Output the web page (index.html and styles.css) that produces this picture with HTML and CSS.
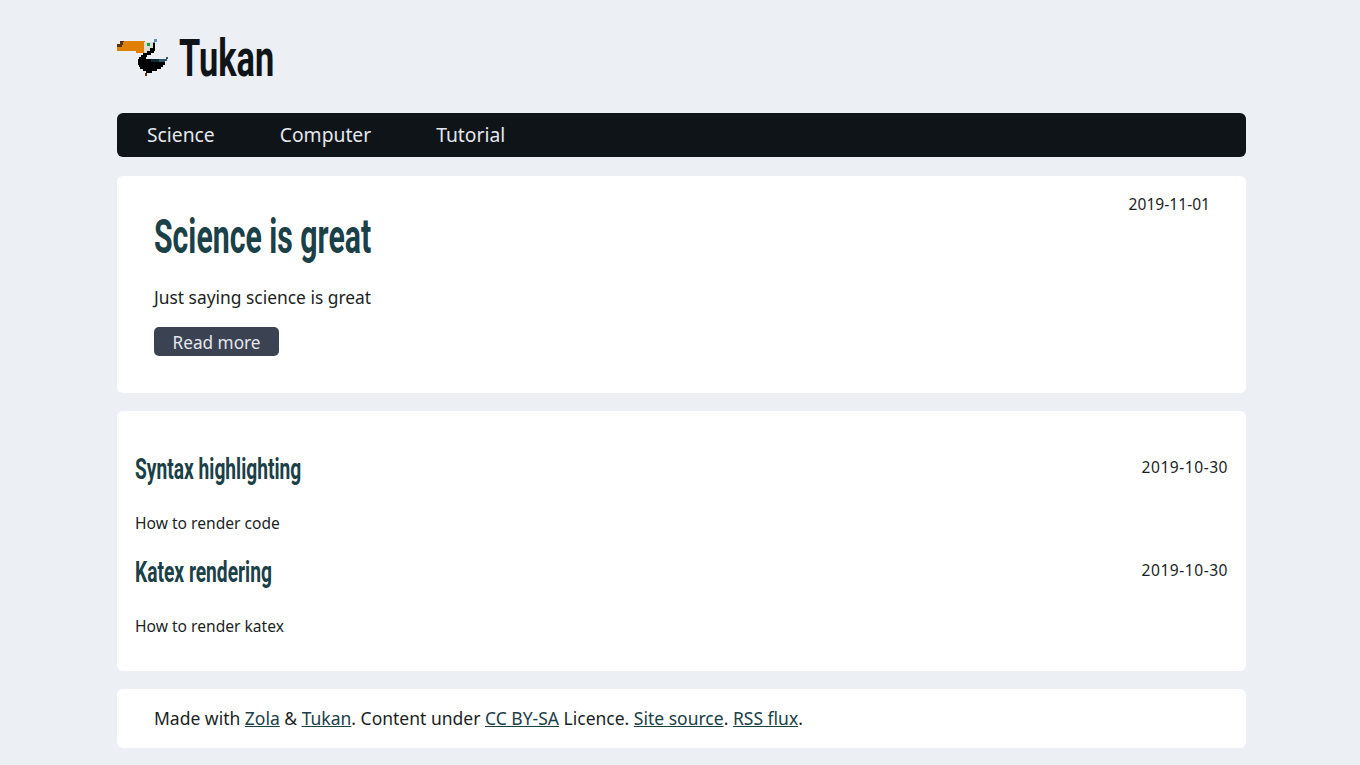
FILE: index.html
```html
<!DOCTYPE html>
<html lang="en">
<head>
<meta charset="utf-8">
<title>Tukan</title>
<link rel="stylesheet" href="styles.css">
</head>
<body>
<div class="page">
  <header class="brand">
    <svg class="logo" width="52" height="40" viewBox="0 0 52 40" shape-rendering="crispEdges" aria-hidden="true">
      <path fill="#e08000" d="M7 2H28V14H19V12H0V8H4Z"/>
      <path fill="#5a3208" d="M3 2H7L5 8H0V5H3Z"/>
      <path fill="#dcdcdc" d="M27 3H36V9H33V12H30V14H27Z"/>
      <path fill="#0aa83c" d="M30 4H33V7H30Z"/>
      <path fill="#000" d="M36 4H38V9H36ZM33 9H38V12H33ZM30 12H37V14H30ZM26 14H34V16H26ZM24 16H30V18H24ZM22 18H29V20H22ZM21 20H34V23H21ZM21 23H48V26H21ZM22 26H46V28H22ZM23 28H44V30H23ZM26 30H40V32H26ZM29 32H35V34H29Z"/>
      <path fill="#0f2a38" d="M34 20H42V23H34Z"/>
      <path fill="#2f5a6e" d="M42 20H50V22H42ZM42 22H48V23H42ZM49 18H51V20H49Z"/>
      <path fill="#5f93ab" d="M37 0H40V3H37ZM36 3H38V4H36Z"/>
      <path fill="#5a3208" d="M28 34H30V37H28Z"/>
    </svg>
    <h1 class="site-title"><span>Tukan</span></h1>
  </header>
  <nav class="nav">
    <a href="#">Science</a>
    <a href="#">Computer</a>
    <a href="#">Tutorial</a>
  </nav>
  <section class="card featured">
    <div class="row">
      <h2 class="title-lg"><span>Science is great</span></h2>
      <time class="date">2019-11-01</time>
    </div>
    <p class="summary">Just saying science is great</p>
    <a class="btn" href="#">Read more</a>
  </section>
  <section class="card list">
    <article class="post">
      <div class="row">
        <h3 class="title-sm"><span>Syntax highlighting</span></h3>
        <time class="date">2019-10-30</time>
      </div>
      <p class="desc">How to render code</p>
    </article>
    <article class="post">
      <div class="row">
        <h3 class="title-sm"><span>Katex rendering</span></h3>
        <time class="date">2019-10-30</time>
      </div>
      <p class="desc">How to render katex</p>
    </article>
  </section>
  <footer class="card foot">
    Made with <a href="#">Zola</a> &amp; <a href="#">Tukan</a>. Content under <a href="#">CC BY-SA</a> Licence. <a href="#">Site source</a>. <a href="#">RSS flux</a>.
  </footer>
</div>
</body>
</html>
```
FILE: styles.css
```css
* { box-sizing: border-box; }
html, body { margin: 0; }
body {
  background: #eceff4;
  color: #1a1f24;
  font-family: "Noto Sans", sans-serif;
  font-size: 17.5px;
  line-height: 1.5;
}
.page {
  width: 1129px;
  margin-left: 117px;
  padding-top: 32px;
}
.brand {
  display: flex;
  align-items: center;
  height: 54px;
  gap: 10px;
  margin-bottom: 27px;
}
.logo { flex: none; }
.site-title {
  margin: 0;
  font: 700 52px/54px "Roboto", sans-serif;
  color: #0f1419;
}
.site-title span { display: inline-block; transform: scaleX(.66); transform-origin: left center; }
.nav {
  display: flex;
  align-items: center;
  gap: 65px;
  height: 44px;
  padding-left: 30px;
  background: #0f1419;
  border-radius: 6px;
  margin-bottom: 19px;
}
.nav a { color: #e4e7ec; text-decoration: none; font-size: 19.3px; }
.card { background: #fff; border-radius: 6px; }
.featured {
  height: 217px;
  padding: 16px 36px 0 37px;
  margin-bottom: 18px;
}
.row { display: flex; justify-content: space-between; align-items: flex-start; }
.title-lg {
  margin: 17px 0 0;
  font: 700 48px/56px "Roboto", sans-serif;
  color: #1a4048;
}
.title-lg span { display: inline-block; transform: scaleX(.63); transform-origin: left center; white-space: nowrap; }
.title-sm span { display: inline-block; transform: scaleX(.64); transform-origin: left center; white-space: nowrap; }
.date { font-size: 15.6px; line-height: 24px; }
.summary { margin: 19px 0 0; font-size: 17.4px; line-height: 26px; }
.btn {
  display: block;
  width: 125px;
  height: 29px;
  margin-top: 17px;
  border-radius: 5px;
  background: #3b4252;
  color: #e4e7ec;
  text-align: center;
  text-decoration: none;
  font-size: 17.2px;
  line-height: 31px;
}
.list {
  height: 260px;
  padding: 41px 18px 0;
  margin-bottom: 18px;
}
.post { height: 103px; }
.title-sm {
  margin: -1px 0 1px;
  font: 700 30px/36px "Roboto", sans-serif;
  color: #1a4048;
}
.post .date { line-height: 30px; letter-spacing: .5px; }
.desc { margin: 23px 0 0; font-size: 15.6px; line-height: 24px; }
.foot {
  height: 59px;
  padding: 16px 37px 0;
  line-height: 26px;
}
.foot a { color: #1a4048; }
```
